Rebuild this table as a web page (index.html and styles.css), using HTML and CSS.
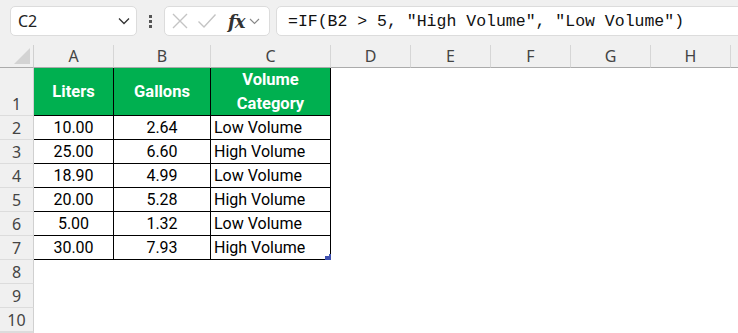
FILE: index.html
```html
<!DOCTYPE html>
<html lang="en">
<head>
<meta charset="UTF-8">
<meta name="viewport" content="width=device-width, initial-scale=1.0">
<title>Volume Category</title>
<link rel="stylesheet" href="styles.css">
</head>
<body>
<div class="toolbar">
    <div class="name-box">
        <span class="cell-ref">C2</span>
        <svg class="chevron" width="12" height="8" viewBox="0 0 12 8"><path d="M1 1.5 L6 6.5 L11 1.5" fill="none" stroke="#333" stroke-width="1.3"/></svg>
    </div>
    <div class="grip">
        <span></span><span></span><span></span>
    </div>
    <div class="fx-box">
        <svg width="18" height="18" viewBox="0 0 18 18"><path d="M2 2 L16 16 M16 2 L2 16" stroke="#c4c4c4" stroke-width="1.4" fill="none"/></svg>
        <svg width="20" height="18" viewBox="0 0 20 18"><path d="M1.5 9.5 L7 15 L18.5 2.5" stroke="#c4c4c4" stroke-width="1.4" fill="none"/></svg>
        <span class="fx">fx</span>
        <svg class="chevron-small" width="11" height="7" viewBox="0 0 11 7"><path d="M1 1 L5.5 5.5 L10 1" fill="none" stroke="#888" stroke-width="1.1"/></svg>
    </div>
    <div class="formula">=IF(B2 &gt; 5, "High Volume", "Low Volume")</div>
</div>

<div class="sheet">
    <div class="col-head corner"><span class="corner-mark"></span></div>
    <div class="col-head">A</div>
    <div class="col-head">B</div>
    <div class="col-head">C</div>
    <div class="col-head">D</div>
    <div class="col-head">E</div>
    <div class="col-head">F</div>
    <div class="col-head">G</div>
    <div class="col-head">H</div>
    <div class="col-head last"></div>

    <div class="row-num">1</div>
    <div class="cell head">Liters</div>
    <div class="cell head">Gallons</div>
    <div class="cell head">Volume<br>Category</div>

    <div class="row-num">2</div>
    <div class="cell">10.00</div>
    <div class="cell">2.64</div>
    <div class="cell text">Low Volume</div>

    <div class="row-num">3</div>
    <div class="cell">25.00</div>
    <div class="cell">6.60</div>
    <div class="cell text">High Volume</div>

    <div class="row-num">4</div>
    <div class="cell">18.90</div>
    <div class="cell">4.99</div>
    <div class="cell text">Low Volume</div>

    <div class="row-num">5</div>
    <div class="cell">20.00</div>
    <div class="cell">5.28</div>
    <div class="cell text">High Volume</div>

    <div class="row-num">6</div>
    <div class="cell">5.00</div>
    <div class="cell">1.32</div>
    <div class="cell text">Low Volume</div>

    <div class="row-num">7</div>
    <div class="cell">30.00</div>
    <div class="cell">7.93</div>
    <div class="cell text">High Volume<span class="fill-handle"></span></div>

    <div class="row-num">8</div>
    <div class="row-num">9</div>
    <div class="row-num">10</div>
    <div class="row-num"></div>
</div>
</body>
</html>
```

FILE: styles.css
```css
body {
    margin: 0;
    padding: 0;
    background-color: #ffffff;
    font-family: "Noto Sans", sans-serif;
    overflow: hidden;
}

/* formula bar */
.toolbar {
    height: 45px;
    box-sizing: border-box;
    padding: 6px 0 0 10px;
    background-color: #f0f0f0;
    display: flex;
    align-items: flex-start;
    overflow: hidden;
}

.toolbar > div {
    flex-shrink: 0;
}

.name-box, .fx-box, .formula {
    height: 30px;
    box-sizing: border-box;
    background-color: #ffffff;
    border: 1px solid #dcdcdc;
    border-radius: 5px;
    display: flex;
    align-items: center;
}

.name-box {
    width: 127px;
    padding: 0 6px 0 7px;
    justify-content: space-between;
}

.cell-ref {
    font-size: 16px;
    color: #222;
}

.grip {
    width: 27px;
    height: 30px;
    display: flex;
    flex-direction: column;
    align-items: center;
    justify-content: center;
    gap: 2px;
}

.grip span {
    width: 3px;
    height: 3px;
    background-color: #555;
}

.fx-box {
    width: 106px;
    padding: 0 6px 0 6px;
    gap: 8px;
}

.fx {
    font-family: "DejaVu Serif", serif;
    font-style: italic;
    font-weight: bold;
    font-size: 18px;
    color: #333;
    margin-left: 3px;
    letter-spacing: -1px;
}

.chevron-small {
    margin-left: -3px;
}

.formula {
    margin-left: 6px;
    width: 500px;
    padding-left: 11px;
    font-family: "Liberation Mono", monospace;
    font-size: 16.5px;
    color: #111;
    white-space: pre;
}

/* worksheet grid */
.sheet {
    display: grid;
    grid-template-columns: 34px 80px 97px 120px 80px 80px 80px 80px 80px 1fr;
    grid-template-rows: 23px 48px repeat(9, 24px) 1px;
    font-family: Roboto, sans-serif;
    font-size: 16px;
    color: #000;
}

.col-head {
    background-color: #f0f0f0;
    border-right: 1px solid #d6d6d6;
    border-bottom: 1px solid #ababab;
    font-family: "Noto Sans", sans-serif;
    font-size: 16px;
    color: #444;
    display: flex;
    align-items: center;
    justify-content: center;
}

.col-head.last {
    border-right: none;
}

.corner {
    position: relative;
    border-right-color: #d0d0d0;
}

.corner-mark {
    position: absolute;
    right: 3px;
    bottom: 3px;
    width: 0;
    height: 0;
    border-left: 16px solid transparent;
    border-bottom: 16px solid #d3d3d3;
}

.row-num {
    grid-column: 1;
    background-color: #f0f0f0;
    border-right: 1px solid #d0d0d0;
    border-bottom: 1px solid #dcdcdc;
    font-family: "Noto Sans", sans-serif;
    font-size: 16px;
    color: #444;
    display: flex;
    align-items: flex-end;
    justify-content: center;
    line-height: 22px;
    overflow: hidden;
}

.cell {
    border-right: 1px solid #000;
    border-bottom: 1px solid #000;
    display: flex;
    align-items: center;
    justify-content: center;
    line-height: 23px;
}

.cell.text {
    justify-content: flex-start;
    padding-left: 3px;
    position: relative;
}

.cell.head {
    background-color: #00b050;
    color: #ffffff;
    font-weight: bold;
    font-size: 16.5px;
    text-align: center;
    line-height: 24px;
}

.fill-handle {
    position: absolute;
    right: -1px;
    bottom: -1px;
    width: 6px;
    height: 4px;
    background-color: #3f51b0;
}

.fill-handle::before {
    content: "";
    position: absolute;
    right: 0;
    top: -2px;
    width: 2px;
    height: 2px;
    background-color: #3f51b0;
}
```
